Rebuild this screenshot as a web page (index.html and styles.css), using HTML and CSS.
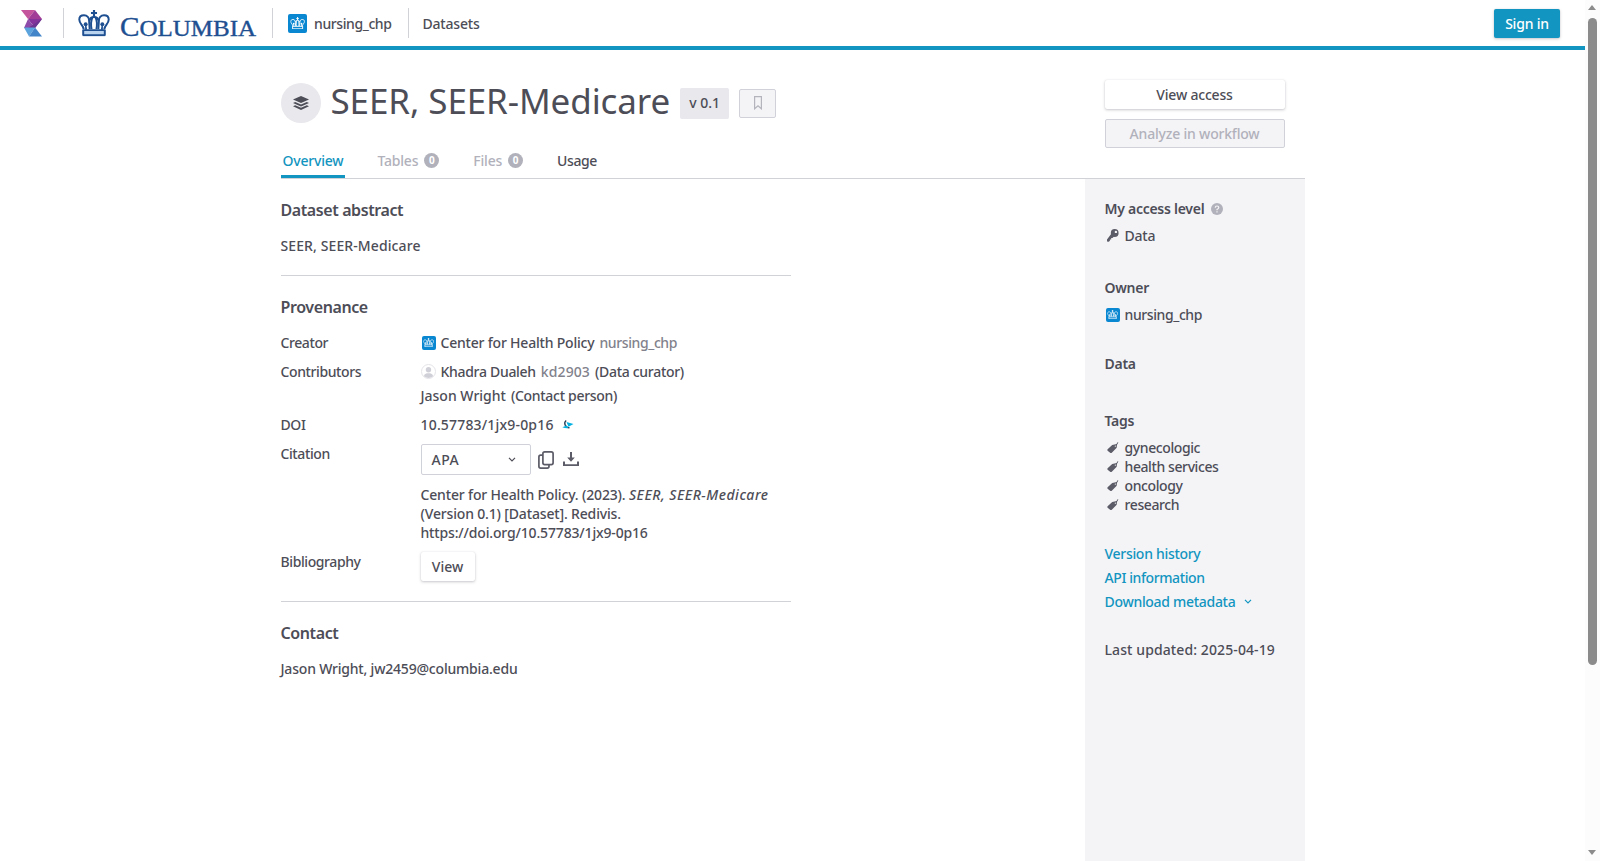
FILE: index.html
```html
<!DOCTYPE html>
<html lang="en">
<head>
<meta charset="utf-8">
<title>SEER, SEER-Medicare</title>
<link rel="stylesheet" href="styles.css">
</head>
<body>
<svg width="0" height="0" class="defs" aria-hidden="true">
  <symbol id="crown" viewBox="0 0 32 27">
    <path d="M14.900 0h2.200v2h2v2h-2v3h-2.200V4h-2V2h2z"/>
    <g fill="none" stroke="currentColor" stroke-width="2">
      <path d="M5.500 19.500C5 15.500 1 14 1 9.800 1 7 3 5.400 5.800 5.400c3.400 0 5.200 2.600 5.200 5.600l.6 8.500M26.500 19.500c.5-4 4.500-5.500 4.500-9.700 0-2.800-2-4.400-4.800-4.400-3.400 0-5.200 2.600-5.200 5.600l-.6 8.500"/>
      <path d="M11.500 10.500C12 8.200 13.500 7.200 16 7.200s4 1 4.500 3.300M14.300 8c-1.500 3-1.600 7-.8 11.500M17.700 8c1.500 3 1.600 7 .8 11.500"/>
      <path d="M4.500 20.500h23M4.500 25.800h23M5 20v6M27 20v6"/>
    </g>
    <circle cx="7.500" cy="14.500" r="2"/><circle cx="24.500" cy="14.500" r="2"/>
    <path d="M6.800 15h1.400l.8 5H7zM23.800 15h1.400L25 20h-2z"/>
  </symbol>
  <symbol id="tag" viewBox="0 0 12 12">
    <path d="M.6 7.300 5.200 2.900l3.500-.7q1.700-.3 2-2.100l.6.200Q11 2 10 2.700l-.3 3-4.900 5.100q-.9.600-1.700-.1L.6 8.800q-.6-.7 0-1.500zM8.300 3.500a.6.600 0 1 0 .1 1.200.6.600 0 0 0-.1-1.200z" fill-rule="evenodd"/>
  </symbol>
  <symbol id="chevron" viewBox="0 0 8 5"><path d="M1 .8l3 3 3-3" fill="none" stroke="currentColor" stroke-width="1.200"/></symbol>
</svg>

<header class="topbar">
  <svg class="brand" viewBox="0 0 22 28" width="22" height="28">
    <path d="M0 1h14l-7 9z" fill="#c4549b"/><path d="M14 1l7 9H7z" fill="#a13d97"/>
    <path d="M7 10h14l-7 9z" fill="#84349a"/><path d="M7 10l7 9H3z" fill="#8d4aa8"/><path d="M21 10l-7 9L7 19z" fill="#6b3590"/>
    <path d="M3 18.500h11l-6 9z" fill="#5ba3dc"/><path d="M14 18.500l7 9H8z" fill="#4285c8"/>
  </svg>
  <svg class="columbia" viewBox="0 0 179 30" width="179" height="30">
    <rect x="5" y="22.500" width="22" height="5" fill="#b9d3ee"/>
    <use href="#crown" x="0" y="2" width="32" height="26.500"/>
    <text x="42" y="28" textLength="136" lengthAdjust="spacingAndGlyphs"><tspan font-size="28">C</tspan><tspan font-size="24">OLUMBIA</tspan></text>
  </svg>
  <a class="crumb org"><span class="logo"><svg viewBox="0 0 32 27"><use href="#crown"/></svg></span><span class="tight">nursing_chp</span></a>
  <a class="crumb"><span>Datasets</span></a>
  <a class="btn primary"><span>Sign in</span></a>
</header>

<div class="page">
  <div class="head">
    <div class="head-main">
      <div class="title-row">
        <span class="ds-icon"><svg viewBox="0 0 16 14" width="16" height="14"><path d="M8 0l8 3.500L8 7 0 3.500z"/><path d="M0 7l2.200-1L8 8.500 13.800 6l2.200 1-8 3.500z"/><path d="M0 10.300l2.200-1L8 11.800l5.800-2.500 2.200 1-8 3.600z"/></svg></span>
        <h1>SEER, SEER-Medicare</h1>
        <span class="version">v 0.1</span>
        <span class="bookmark"><svg viewBox="0 0 8 14" width="8" height="14"><path d="M.6.600h6.800v12.200L4 9.800.6 12.800z" fill="none" stroke="#b4b4bc" stroke-width="1.200"/></svg></span>
      </div>
      <nav class="tabs">
        <a class="tab active">Overview</a>
        <a class="tab off">Tables<b>0</b></a>
        <a class="tab off">Files<b>0</b></a>
        <a class="tab tight">Usage</a>
      </nav>
    </div>
    <div class="actions">
      <a class="btn">View access</a>
      <a class="btn disabled">Analyze in workflow</a>
    </div>
  </div>

  <div class="body">
    <main>
      <section>
        <h2>Dataset abstract</h2>
        <p class="wide">SEER, SEER-Medicare</p>
      </section>
      <section>
        <h2>Provenance</h2>
        <dl>
          <dt>Creator</dt>
          <dd class="person"><span class="logo sm"><svg viewBox="0 0 32 27"><use href="#crown"/></svg></span><span>Center for Health Policy</span><i class="tight">nursing_chp</i></dd>
          <dt>Contributors</dt>
          <dd class="people">
            <div class="person"><svg class="avatar" viewBox="0 0 15 15" width="15" height="15"><circle cx="7.500" cy="7.500" r="7" fill="#fff" stroke="#e4e4e9"/><circle cx="7.500" cy="5.700" r="2.700" fill="#d0d0d8"/><path d="M2.800 12.200q.4-2.400 3-3h3.400q2.600.6 3 3-4.700 3.600-9.400 0z" fill="#d0d0d8"/></svg><span class="snug">Khadra Dualeh</span><i class="wide">kd2903</i><span class="snug">(Data curator)</span></div>
            <div class="person"><span class="even">Jason Wright</span><span class="snug">(Contact person)</span></div>
          </dd>
          <dt>DOI</dt>
          <dd class="doi"><span class="wider">10.57783/1jx9-0p16</span><svg viewBox="0 0 12 10" width="12" height="10"><path d="M4.200.5Q1.800 2.500 3.300 5.400 4.800 8 7.500 7.700" fill="none" stroke="#243b54" stroke-width="1.300"/><path d="M4.500 2 11.500 4.100 6.500 6.800z" fill="#00b1e2"/><path d="M.3 7.200l4.200-1.700 2 2.600q-3.200.3-6.200-.9z" fill="#00b1e2"/></svg></dd>
          <dt>Citation</dt>
          <dd class="cite">
            <div class="cite-tools">
              <span class="select"><span class="caps">APA</span><svg width="8" height="5"><use href="#chevron"/></svg></span>
              <svg viewBox="0 0 16 18" width="16" height="18" class="copy"><rect x="4.900" y=".9" width="10.200" height="12.700" rx="1.800"/><path d="M4.900 4.200H2.700Q.9 4.200.9 6v9.300q0 1.800 1.800 1.800h6.500q1.800 0 1.800-1.800v-1.700"/></svg>
              <svg viewBox="0 0 16 15" width="16" height="15" class="dl"><path d="M7 0h2v5.500h2.800L8 9.800 4.200 5.500H7z"/><path d="M0 9.500h2v2.700h12V9.500h2V14H0z"/></svg>
            </div>
            <div class="cite-text">Center for Health Policy. (2023). <em>SEER, SEER-Medicare</em><br>(Version 0.1) [Dataset]. Redivis.<br>https://doi.org/10.57783/1jx9-0p16</div>
          </dd>
          <dt>Bibliography</dt>
          <dd><a class="btn small even">View</a></dd>
        </dl>
      </section>
      <section>
        <h2>Contact</h2>
        <p>Jason Wright, jw2459@columbia.edu</p>
      </section>
    </main>
    <aside>
      <h3>My access level<svg viewBox="0 0 12 12" width="12" height="12"><circle cx="6" cy="6" r="6" fill="#b1b1bb"/><path d="M4.200 4.700Q4.300 3 6 3t1.800 1.500Q7.800 5.400 6 6.500v.8M6 8.300v1.300" fill="none" stroke="#f4f4f7" stroke-width="1.200"/></svg></h3>
      <div class="row"><svg class="key" viewBox="0 0 12 13" width="12" height="13"><circle cx="7.700" cy="4" r="3.900"/><path d="M4.300 4.800 7 7.600 5.500 9.100H4.200v1.400H2.900v1.300L1.800 12.800 0 12.400V10.400z"/><circle cx="8.900" cy="2.900" r="1.200" fill="#f4f4f7"/></svg><span>Data</span></div>
      <h3>Owner</h3>
      <div class="row tight"><span class="logo sm"><svg viewBox="0 0 32 27"><use href="#crown"/></svg></span><span>nursing_chp</span></div>
      <h3 class="data">Data</h3>
      <h3 class="tags">Tags</h3>
      <div class="row tight"><svg width="12" height="12"><use href="#tag"/></svg><span>gynecologic</span></div>
      <div class="row tight"><svg width="12" height="12"><use href="#tag"/></svg><span>health services</span></div>
      <div class="row tight"><svg width="12" height="12"><use href="#tag"/></svg><span>oncology</span></div>
      <div class="row tight"><svg width="12" height="12"><use href="#tag"/></svg><span>research</span></div>
      <div class="links">
        <a>Version history</a>
        <a class="tight">API information</a>
        <a>Download metadata<svg width="8" height="5"><use href="#chevron"/></svg></a>
      </div>
      <div class="updated wide">Last updated: 2025-04-19</div>
    </aside>
  </div>
</div>

<div class="scrollbar"><i class="up"></i><span class="thumb"></span><i class="down"></i></div>
</body>
</html>
```
FILE: styles.css
```css
* { box-sizing: border-box; }
body {
  margin: 0;
  height: 861px;
  padding-right: 15px;
  overflow: hidden;
  background: #fff;
  color: #4d4d57;
  font: 500 14px/19px "Noto Sans", sans-serif;
  letter-spacing: -.2px;
}
svg { display: block; fill: currentColor; flex: none; }
.defs { position: absolute; }
h1, h2, h3, p, dl, dd { margin: 0; }

/* tracking steps */
.tight { letter-spacing: -.4px; }
.snug { letter-spacing: -.3px; }
.even { letter-spacing: 0; }
.wide { letter-spacing: .1px; }
.wider { letter-spacing: .18px; }
.caps { letter-spacing: .5px; }

.topbar {
  display: flex;
  align-items: center;
  height: 50px;
  padding: 0 25px 0 21px;
  border-bottom: 4px solid #1295c0;
}
.columbia {
  margin-left: 20px;
  color: #1d4f91;
  box-sizing: content-box;
  padding: 0 15px 0 14px;
  border-left: 1px solid #d1d1d8;
  overflow: visible;
}
.columbia text {
  font-family: "Liberation Serif", serif;
  font-weight: 400;
  letter-spacing: 0;
  stroke: currentColor;
  stroke-width: .4px;
}
.crumb {
  display: flex;
  align-items: center;
  height: 30px;
  padding: 0 16px 0 14px;
  border-left: 1px solid #d1d1d8;
}
.org { padding-left: 15px; }
.org .logo { margin-right: 7px; }
.logo {
  display: flex;
  align-items: center;
  justify-content: center;
  flex: none;
  width: 19px;
  height: 19px;
  border-radius: 2px;
  background: #0a87d1;
  color: #fff;
}
.logo svg { width: 80%; height: 65%; }
.logo.sm { width: 14px; height: 14px; margin-left: 1px; }

.btn {
  display: flex;
  align-items: center;
  justify-content: center;
  height: 29px;
  border-radius: 2px;
  background: #fff;
  box-shadow: 0 0 1px rgba(60, 60, 80, .15), 0 1px 3px rgba(60, 60, 80, .28);
}
.primary { width: 66px; margin-left: auto; background: #1295c0; color: #fff; }
.disabled { border: 1px solid #d1d1da; background: #f4f4f7; color: #b1b1bb; box-shadow: none; }
.small { width: 54px; }

.page { width: 1024px; margin: 0 auto; }
.head { display: flex; justify-content: space-between; height: 129px; border-bottom: 1px solid #d1d1d8; }
.title-row { display: flex; align-items: center; height: 40px; margin-top: 33px; }
.ds-icon {
  display: flex;
  align-items: center;
  justify-content: center;
  width: 40px;
  height: 40px;
  border-radius: 50%;
  background: #e8e8ed;
  color: #4d4d57;
}
h1 { margin: -4px 10px 0; font-size: 35px; font-weight: 400; line-height: 40px; letter-spacing: -.1px; }
.version { width: 49px; height: 31px; border-radius: 2px; background: #e8e8ed; line-height: 30px; text-align: center; letter-spacing: 0; }
.bookmark {
  display: flex;
  align-items: center;
  justify-content: center;
  width: 37px;
  height: 29px;
  margin-left: 10px;
  border: 1px solid #d1d1da;
  border-radius: 2px;
  background: #f4f4f7;
}
.tabs { display: flex; gap: 30px; height: 55px; padding-top: 18px; }
.tab { display: flex; align-items: center; height: 37px; padding: 1px 2px 0; }
.active { color: #1295c0; border-bottom: 3px solid #1295c0; padding-top: 4px; }
.off { color: #b1b1bb; }
.tab b {
  width: 15px;
  height: 15px;
  margin-left: 6px;
  border-radius: 50%;
  background: #b1b1bb;
  color: #fff;
  font-size: 10px;
  line-height: 15px;
  letter-spacing: 0;
  text-align: center;
}
.actions { display: flex; flex-direction: column; gap: 10px; width: 180px; margin: 30px 20px 0 0; }

.body { display: flex; justify-content: space-between; height: 682px; }
main { width: 510px; }
section { padding: 20px 0; border-bottom: 1px solid #d1d1d8; }
section:last-child { border: 0; }
h2 { margin-bottom: 15px; font-size: 16px; font-weight: 600; line-height: 22px; letter-spacing: -.4px; }
dl { display: grid; grid-template-columns: 140px 1fr; row-gap: 10px; }
dt { letter-spacing: -.4px; }
.person, .doi { display: flex; align-items: center; gap: 5px; }
.people { display: grid; gap: 5px; }
.person i { font-style: normal; color: #82828c; }
.doi { gap: 8px; }
.cite-tools { display: flex; align-items: center; }
.select {
  display: flex;
  align-items: center;
  justify-content: space-between;
  width: 110px;
  height: 31px;
  padding: 0 14px 0 10px;
  border: 1px solid #d1d1da;
  border-radius: 2px;
}
.copy { margin-left: 7px; fill: none; stroke: #5c5c68; stroke-width: 1.700; }
.dl { margin-left: 9px; fill: #5c5c68; }
.cite-text { margin-top: 10px; letter-spacing: -.16px; }
.cite-text em { letter-spacing: .5px; }

aside { width: 220px; padding: 20px 20px 0; background: #f4f4f7; }
h3 { display: flex; align-items: center; gap: 7px; margin-bottom: 8px; font-size: 14px; font-weight: 600; line-height: 19px; letter-spacing: -.27px; }
.row + h3 { margin-top: 33px; }
.row + .data { margin-top: 30px; }
.tags { margin-top: 38px; }
.row { display: flex; align-items: center; gap: 5px; }
.row > svg { margin-left: 2px; margin-right: 1px; color: #5c5c68; }
.links { margin-top: 27px; color: #1295c0; letter-spacing: -.3px; }
.links a { display: flex; align-items: center; gap: 9px; height: 24px; }
.updated { margin-top: 27px; }

.scrollbar { position: absolute; top: 0; right: 0; width: 15px; height: 861px; background: #fcfcfc; }
.thumb { position: absolute; top: 18px; left: 3px; width: 9px; height: 647px; border-radius: 5px; background: #8b8b8b; }
.up, .down { position: absolute; left: 3px; border: 4.500px solid transparent; }
.up { top: 1px; border-bottom: 5px solid #8b8b8b; }
.down { bottom: 2px; border-top: 5px solid #8b8b8b; }
```
